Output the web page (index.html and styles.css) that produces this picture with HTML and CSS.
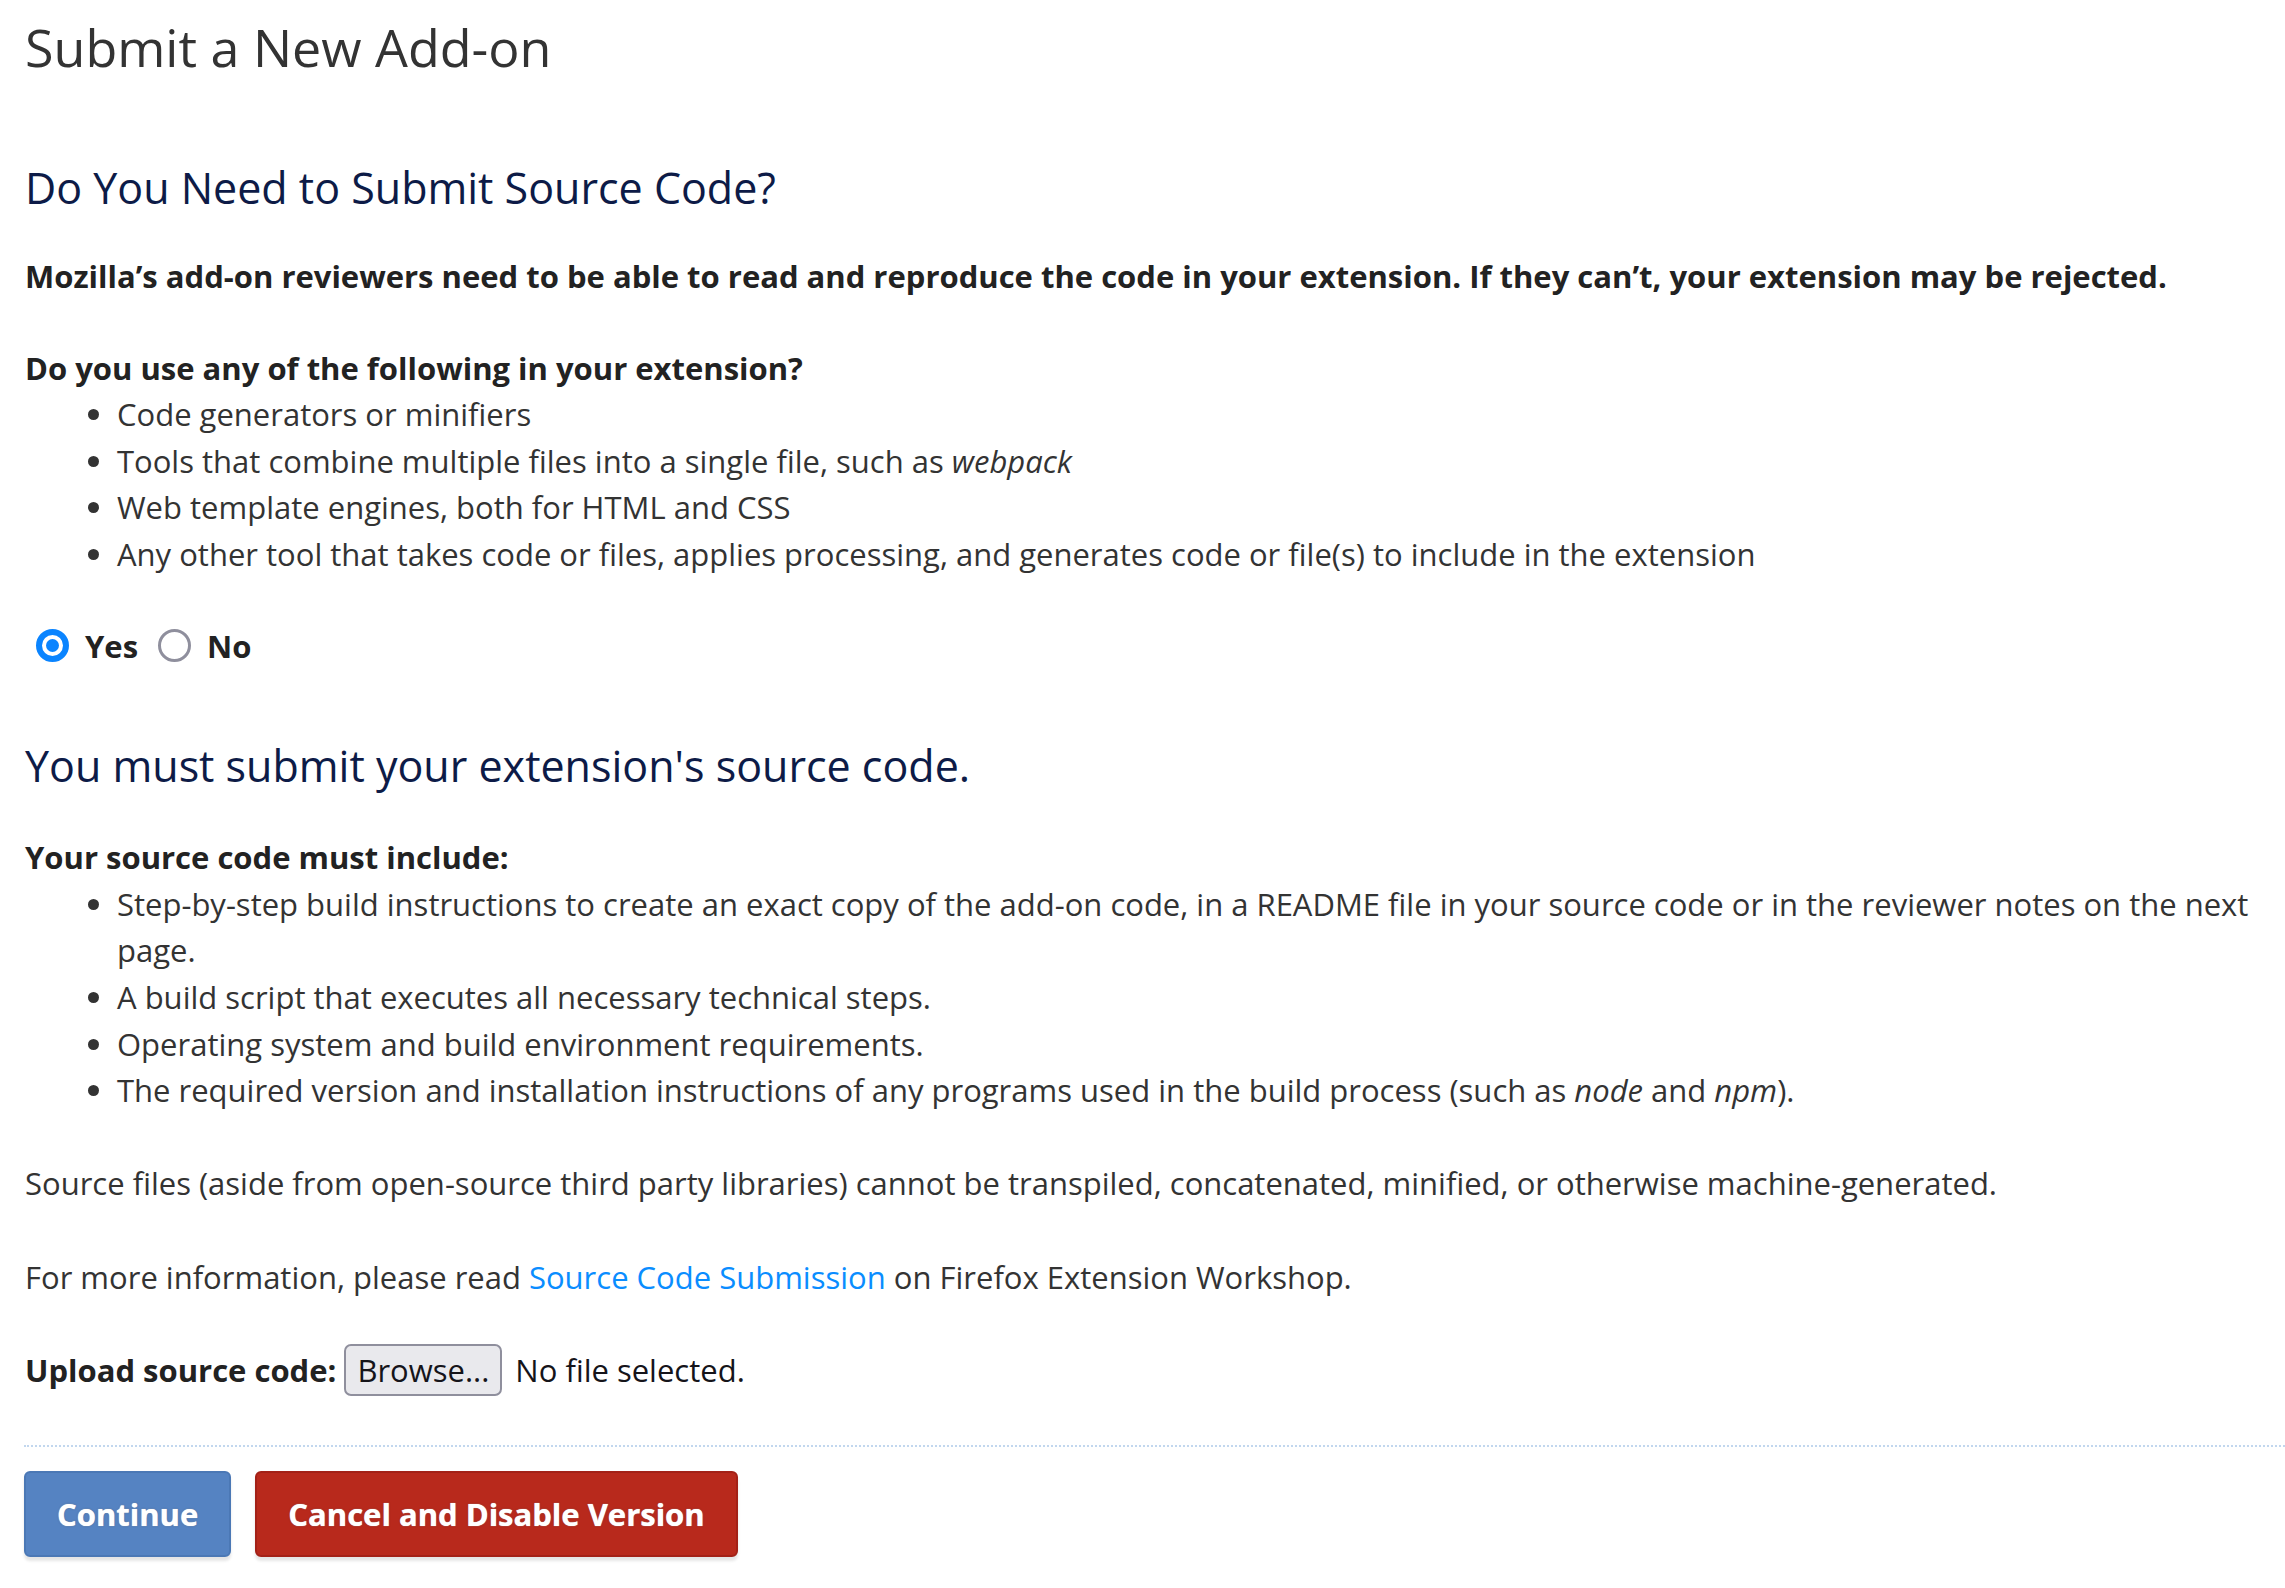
FILE: index.html
```html
<!DOCTYPE html>
<html lang="en">
<head>
<meta charset="utf-8">
<title>Submit a New Add-on</title>
<link rel="stylesheet" href="styles.css">
</head>
<body>
<main class="page">
  <h1 class="page-title">Submit a New Add-on</h1>

  <h2 class="section-title first">Do You Need to Submit Source Code?</h2>
  <p class="lead">Mozilla’s add-on reviewers need to be able to read and reproduce the code in your extension. If they can’t, your extension may be rejected.</p>

  <p class="question">Do you use any of the following in your extension?</p>
  <ul class="bullets">
    <li>Code generators or minifiers</li>
    <li>Tools that combine multiple files into a single file, such as <em>webpack</em></li>
    <li>Web template engines, both for HTML and CSS</li>
    <li>Any other tool that takes code or files, applies processing, and generates code or file(s) to include in the extension</li>
  </ul>

  <div class="choices">
    <label class="choice"><span class="radio checked"></span><span class="choice-label">Yes</span></label>
    <label class="choice"><span class="radio"></span><span class="choice-label">No</span></label>
  </div>

  <h2 class="section-title second">You must submit your extension's source code.</h2>
  <p class="question">Your source code must include:</p>
  <ul class="bullets">
    <li>Step-by-step build instructions to create an exact copy of the add-on code, in a README file in your source code or in the reviewer notes on the next page.</li>
    <li>A build script that executes all necessary technical steps.</li>
    <li>Operating system and build environment requirements.</li>
    <li>The required version and installation instructions of any programs used in the build process (such as <em>node</em> and <em>npm</em>).</li>
  </ul>

  <p class="body-text">Source files (aside from open-source third party libraries) cannot be transpiled, concatenated, minified, or otherwise machine-generated.</p>

  <p class="body-text">For more information, please read <a class="link" href="#">Source Code Submission</a> on Firefox Extension Workshop.</p>

  <div class="upload-row">
    <span class="upload-label">Upload source code:</span>
    <span class="browse-btn">Browse...</span>
    <span class="file-status">No file selected.</span>
  </div>

  <div class="actions">
    <button class="btn btn-continue" type="button">Continue</button>
    <button class="btn btn-cancel" type="button">Cancel and Disable Version</button>
  </div>
</main>
</body>
</html>
```

FILE: styles.css
```css
html, body {
  margin: 0;
  padding: 0;
  background: #ffffff;
}

body {
  font-family: "Open Sans", "Noto Sans", "Liberation Sans", sans-serif;
  font-size: 31px;
  line-height: 46.6px;
  color: #333333;
}

.page {
  padding: 0 0 40px 25px;
  box-sizing: border-box;
  width: 2285px;
}

.page-title {
  margin: 16px 0 0;
  font-size: 52px;
  line-height: 62px;
  font-weight: 400;
  color: #333333;
}

.section-title {
  margin: 0;
  font-size: 43px;
  line-height: 52px;
  font-weight: 400;
  color: #0d1b47;
}

.section-title.first {
  margin-top: 84px;
}

.section-title.second {
  margin-top: 71px;
}

.lead {
  margin: 39px 0 0;
  font-weight: 700;
  color: #222222;
}

.question {
  margin: 45px 0 0;
  font-weight: 700;
  color: #222222;
}

.section-title + .question {
  margin-top: 42px;
}

.bullets {
  margin: 0;
  padding-left: 92px;
}

.bullets li {
  margin: 0;
}

.body-text {
  margin: 46.6px 0 0;
}

.link {
  color: #0a8dff;
  text-decoration: none;
}

.choices {
  margin-top: 45px;
  height: 46.6px;
  display: flex;
  align-items: center;
  padding-left: 11px;
  gap: 20px;
}

.choice {
  display: flex;
  align-items: center;
  gap: 16px;
  font-weight: 700;
  color: #222222;
}

.radio {
  box-sizing: border-box;
  width: 33px;
  height: 33px;
  border-radius: 50%;
  border: 3px solid #8f8f9d;
  background: #ffffff;
  display: inline-block;
}

.radio.checked {
  border: 6px solid #0a84ff;
  position: relative;
}

.radio.checked::after {
  content: "";
  position: absolute;
  left: 4px;
  top: 4px;
  width: 13px;
  height: 13px;
  border-radius: 50%;
  background: #0a84ff;
}

.upload-row {
  margin-top: 46.6px;
  height: 46.6px;
  display: flex;
  align-items: center;
}

.upload-label {
  font-weight: 700;
  color: #222222;
  margin-right: 8px;
}

.browse-btn {
  box-sizing: border-box;
  height: 52px;
  padding: 0 11px;
  display: inline-flex;
  align-items: center;
  background: #e9e9ed;
  border: 2px solid #8f8f9d;
  border-radius: 7px;
  color: #15141a;
  margin-right: 13px;
}

.file-status {
  color: #15141a;
}

.actions {
  margin-top: 52px;
  border-top: 2px dotted #c2d7ee;
  padding-top: 24px;
  display: flex;
  gap: 24px;
  margin-left: -1px;
}

.btn {
  height: 86px;
  padding: 0 31px;
  border-radius: 6px;
  font-family: "Open Sans", "Noto Sans", "Liberation Sans", sans-serif;
  font-size: 31px;
  font-weight: 700;
  color: #ffffff;
  text-shadow: 0 0 1px rgba(255, 255, 255, 0.9), 0 0 2px rgba(0, 0, 0, 0.35);
  box-shadow: 0 4px 3px rgba(0, 0, 0, 0.1);
  cursor: pointer;
}

.btn-continue {
  background: #5583c2;
  border: 2px solid #4b78b5;
}

.btn-cancel {
  background: #b8291c;
  border: 2px solid #a32117;
}
```
